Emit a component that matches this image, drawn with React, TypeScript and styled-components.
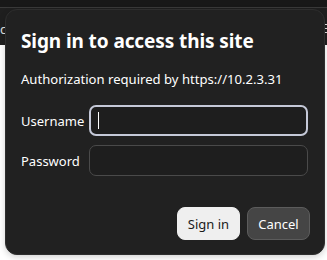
import React from "react";
import styled, { createGlobalStyle } from "styled-components";

const Global = createGlobalStyle`
  html, body { margin: 0; padding: 0; }
  body {
    width: 327px;
    height: 260px;
    overflow: hidden;
    background: #ffffff;
    font-family: "Noto Sans", "Open Sans", sans-serif;
  }
`;

const Page = styled.div`
  position: relative;
  width: 327px;
  height: 260px;
  background: #ffffff;
  overflow: hidden;
`;

const Chrome = styled.div`
  display: flex;
  flex-direction: column;
  height: 45px;
  background: #1f1f1f;
`;

const TabStrip = styled.div`
  height: 7px;
  background: #181818;
  border-bottom: 1px solid #3a3a3a;
`;

const Toolbar = styled.div`
  flex: 1;
  display: flex;
  align-items: center;
  justify-content: space-between;
  color: #e0e0e0;
  font-size: 13px;
`;

const EdgeGlyph = styled.span`
  margin-left: 0;
  margin-top: 4px;
`;

const MenuLines = styled.div`
  display: flex;
  flex-direction: column;
  gap: 3px;
  margin-top: 4px;
  span {
    display: block;
    width: 4px;
    height: 1px;
    background: #e0e0e0;
  }
`;

const Dialog = styled.div`
  position: absolute;
  left: 5px;
  top: 9px;
  width: 320px;
  height: 246px;
  box-sizing: border-box;
  background: #212121;
  border: 1px solid #2e2e2e;
  border-radius: 12px;
  box-shadow: 0 2px 6px rgba(0, 0, 0, 0.18);
  padding: 18px 16px 0 15px;
  display: flex;
  flex-direction: column;
  color: #ffffff;
`;

const Title = styled.h1`
  margin: 0;
  font-size: 19px;
  font-weight: 700;
  line-height: 27px;
  letter-spacing: -0.1px;
`;

const Message = styled.p`
  margin: 15px 0 0 0;
  font-size: 13.1px;
  line-height: 18px;
  color: #ffffff;
`;

const Form = styled.div`
  margin-top: 17px;
  display: grid;
  grid-template-columns: 68px 1fr;
  row-gap: 9px;
  align-items: center;
`;

const Label = styled.label`
  font-size: 13px;
  color: #ffffff;
`;

const Field = styled.div<{ $focused?: boolean }>`
  height: 31px;
  box-sizing: border-box;
  border-radius: 7px;
  border: ${(p) => (p.$focused ? "2px solid #c5c9d8" : "1px solid #4a4a4a")};
  background: #1e1e1e;
  display: flex;
  align-items: center;
  padding-left: ${(p) => (p.$focused ? "7px" : "8px")};
`;

const Caret = styled.span`
  width: 1px;
  height: 17px;
  background: #ffffff;
`;

const Actions = styled.div`
  margin-top: auto;
  margin-bottom: 14px;
  margin-right: -2px;
  display: flex;
  justify-content: flex-end;
  gap: 7px;
`;

const Button = styled.button<{ $primary?: boolean }>`
  height: 33px;
  padding: 0;
  width: 63px;
  box-sizing: border-box;
  border-radius: 8px;
  white-space: nowrap;
  font-family: "Noto Sans", "Open Sans", sans-serif;
  font-size: 13px;
  border: 1px solid ${(p) => (p.$primary ? "#efefef" : "#5c5c5c")};
  background: ${(p) => (p.$primary ? "#efefef" : "#454545")};
  color: ${(p) => (p.$primary ? "#1a1a1a" : "#ffffff")};
`;

export default function App() {
  return (
    <Page>
      <Global />
      <Chrome>
        <TabStrip />
        <Toolbar>
          <EdgeGlyph>c</EdgeGlyph>
          <MenuLines>
            <span />
            <span />
            <span />
          </MenuLines>
        </Toolbar>
      </Chrome>
      <Dialog role="dialog">
        <Title>Sign in to access this site</Title>
        <Message>Authorization required by https://10.2.3.31</Message>
        <Form>
          <Label>Username</Label>
          <Field $focused>
            <Caret />
          </Field>
          <Label>Password</Label>
          <Field />
        </Form>
        <Actions>
          <Button $primary>Sign in</Button>
          <Button>Cancel</Button>
        </Actions>
      </Dialog>
    </Page>
  );
}
